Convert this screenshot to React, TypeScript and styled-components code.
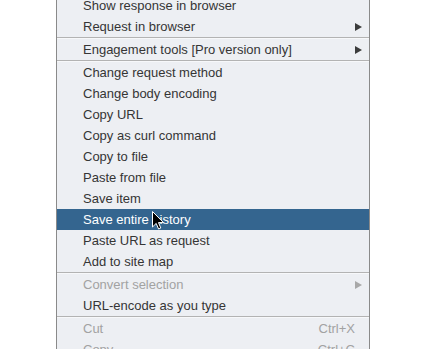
import React from "react";
import styled, { createGlobalStyle } from "styled-components";

const Global = createGlobalStyle`
  html, body { margin: 0; padding: 0; background: #ffffff; }
  body { width: 421px; height: 349px; overflow: hidden; }
`;

const Page = styled.div`
  width: 421px;
  height: 349px;
  overflow: hidden;
  background: #ffffff;
  padding-left: 56px;
  box-sizing: border-box;
`;

const Menu = styled.div`
  position: relative;
  width: 314px;
  margin-top: -6px;
  box-sizing: border-box;
  background: #edeff3;
  border: 1px solid #8a8a8a;
  padding: 0;
  display: flex;
  flex-direction: column;
  font-family: "Liberation Sans", Arial, sans-serif;
  font-size: 13px;
`;

const Row = styled.div<{ $active?: boolean; $disabled?: boolean }>`
  height: 21px;
  display: flex;
  align-items: center;
  padding-left: 26px;
  padding-right: 7px;
  background: ${(p) => (p.$active ? "#34658f" : "transparent")};
  color: ${(p) => (p.$active ? "#ffffff" : p.$disabled ? "#a2a2a2" : "#353535")};
  white-space: nowrap;
`;

const Label = styled.span`
  flex: 1;
`;

const Shortcut = styled.span`
  margin-right: 7px;
`;

const Arrow = styled.span<{ $disabled?: boolean }>`
  width: 0;
  height: 0;
  border-top: 4px solid transparent;
  border-bottom: 4px solid transparent;
  border-left: 7px solid ${(p) => (p.$disabled ? "#a8a8a8" : "#3c3c3c")};
  margin-right: 0;
`;

const Separator = styled.div`
  height: 1px;
  border-top: 1px solid #b3b3b3;
  background: #f7f8fa;
`;

const Cursor = styled.svg`
  position: absolute;
  left: 95px;
  top: 216px;
  width: 12px;
  height: 19px;
`;

type Item =
  | { sep: true }
  | { label: string; sub?: boolean; disabled?: boolean; active?: boolean; shortcut?: string };

const items: Item[] = [
  { label: "Show response in browser" },
  { label: "Request in browser", sub: true },
  { sep: true },
  { label: "Engagement tools [Pro version only]", sub: true },
  { sep: true },
  { label: "Change request method" },
  { label: "Change body encoding" },
  { label: "Copy URL" },
  { label: "Copy as curl command" },
  { label: "Copy to file" },
  { label: "Paste from file" },
  { label: "Save item" },
  { label: "Save entire history", active: true },
  { label: "Paste URL as request" },
  { label: "Add to site map" },
  { sep: true },
  { label: "Convert selection", sub: true, disabled: true },
  { label: "URL-encode as you type" },
  { sep: true },
  { label: "Cut", disabled: true, shortcut: "Ctrl+X" },
  { label: "Copy", disabled: true, shortcut: "Ctrl+C" },
];

export default function App() {
  return (
    <>
      <Global />
      <Page>
        <Menu>
          {items.map((it, i) =>
            "sep" in it ? (
              <Separator key={i} />
            ) : (
              <Row key={i} $active={it.active} $disabled={it.disabled}>
                <Label>{it.label}</Label>
                {it.shortcut && <Shortcut>{it.shortcut}</Shortcut>}
                {it.sub && <Arrow $disabled={it.disabled} />}
              </Row>
            )
          )}
          <Cursor viewBox="0 0 12 19">
            <path
              d="M0.5 0.5 L0.5 16 L4.2 12.4 L6.6 18 L8.8 17 L6.5 11.6 L11.5 11.6 Z"
              fill="#000"
              stroke="#fff"
              strokeWidth="1"
              strokeLinejoin="round"
            />
          </Cursor>
        </Menu>
      </Page>
    </>
  );
}
